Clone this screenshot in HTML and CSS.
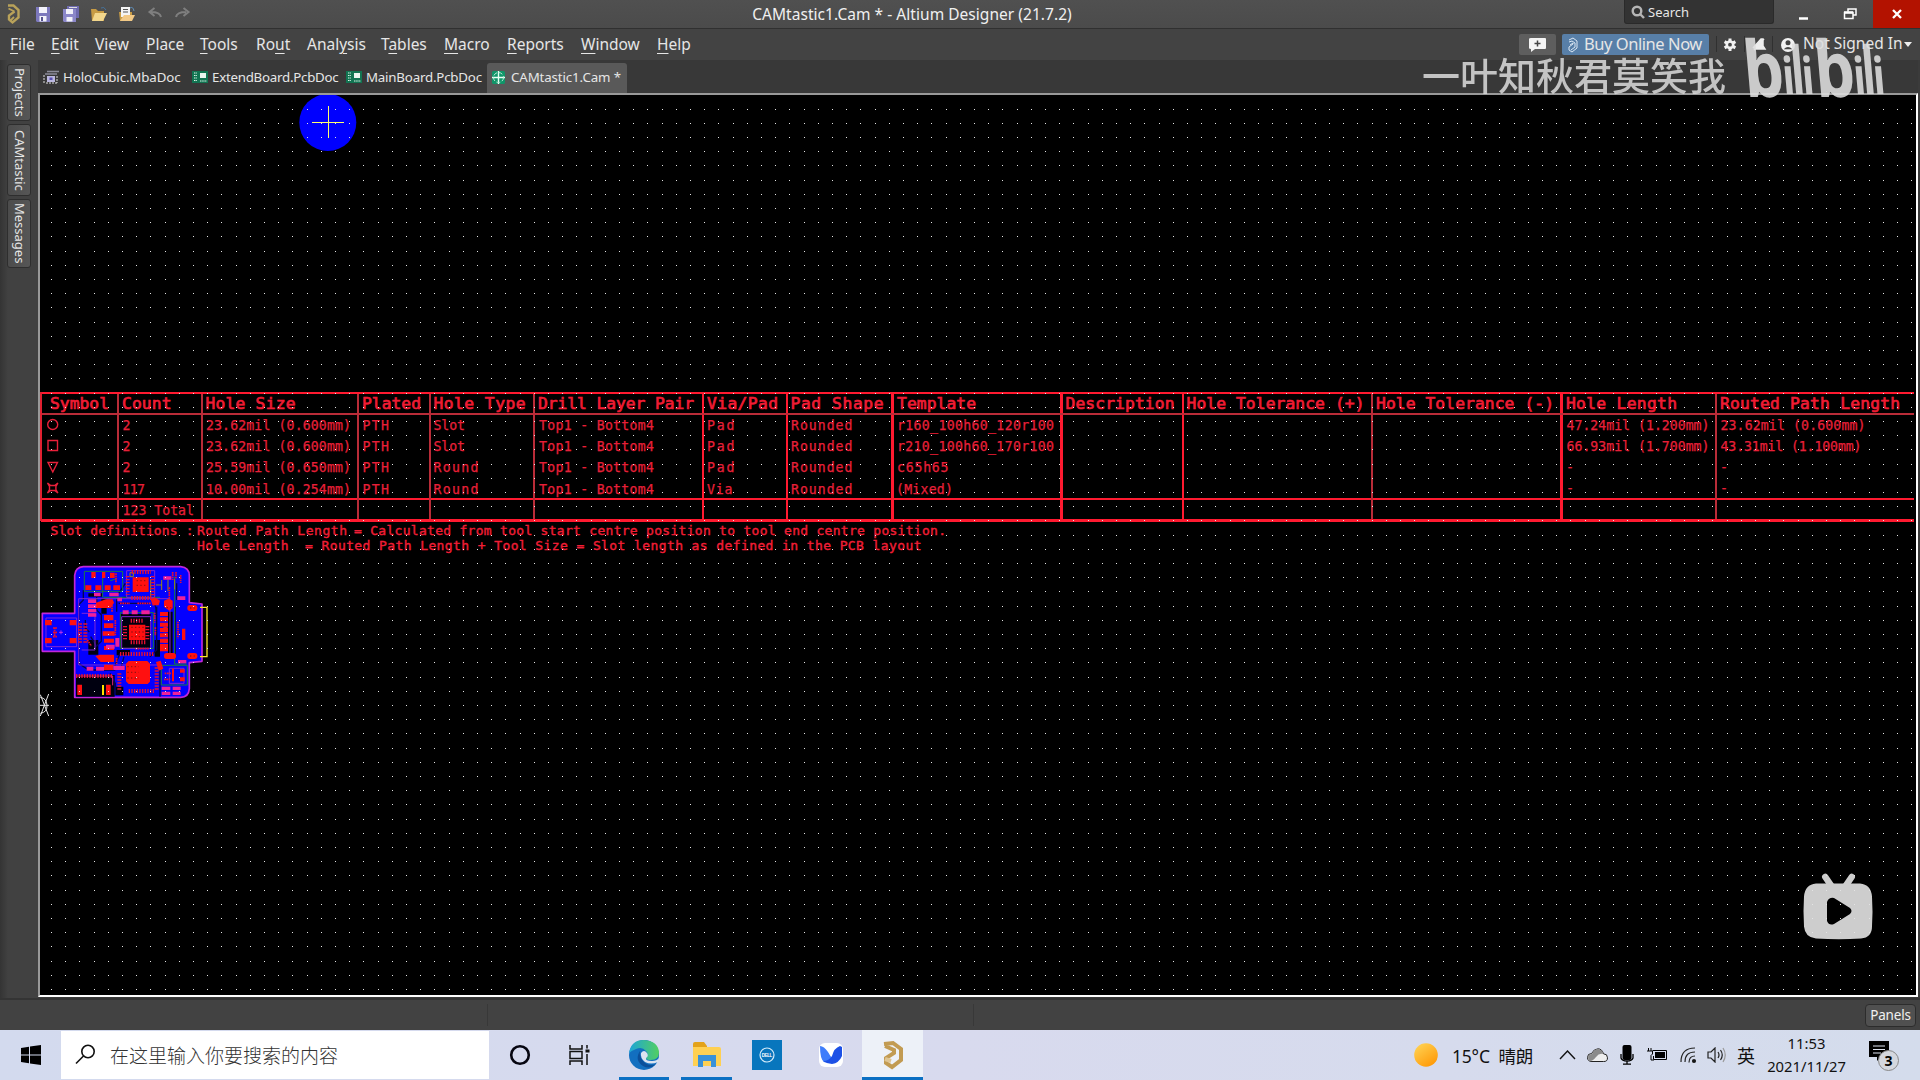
FILE: index.html
```html
<!DOCTYPE html>
<html lang="en">
<head>
<meta charset="utf-8">
<title>CAMtastic1.Cam * - Altium Designer (21.7.2)</title>
<link rel="stylesheet" href="styles.css">
</head>
<body>
<div class="app">
  <header class="titlebar">
    <div class="quick">
      <svg width="200" height="28" viewBox="0 0 200 28">
        <g fill="none" stroke="#b9a25a" stroke-width="2.4"><path d="M8 5.500h5.500l5 4.500v7.500l-6 5-3.500-3v-4l5.500-4"/><path d="M8.500 8.500l6 3M14 17l-4 4" stroke-width="1.800"/></g>
        <g><path d="M36 7h14v15H37l-1-1z" fill="#7c78bd"/><path d="M39 7h8v6h-8zM39.500 16h7v5.500h-7z" fill="#f2f2fa"/><path d="M41 17h2v4h-2z" fill="#55528e"/></g>
        <g><path d="M67 6h12v12H67z" fill="#6e6aae"/><path d="M63 9h13v13H64l-1-1z" fill="#8b87c9"/><path d="M66 9h7v5h-7zM66.500 17h6v4.500h-6z" fill="#f2f2fa"/><path d="M69 7h8v1h-8z" fill="#ddd"/></g>
        <g><path d="M91 9h5l2 2h6v10H92z" fill="#c79b45"/><path d="M95 13h12l-4 8H92z" fill="#f2d68c"/><path d="M101 8q3-2 5 2" fill="none" stroke="#47739b"/></g>
        <g><path d="M119 12h13v9h-12z" fill="#c79b45"/><path d="M121 7h9v10h-9z" fill="#f4f4f4"/><path d="M123 9.500h5M123 12h5" stroke="#555"/><path d="M124 15h11l-3 6h-12z" fill="#f2c986"/><path d="M130 8q3-2 4 3" fill="none" stroke="#5f8fba"/></g>
        <g fill="none" stroke="#7f7f7f" stroke-width="2"><path d="M161 17q-1-5-10-5M154.500 8l-5 4 5 4"/><path d="M176 17q1-5 10-5M183.500 8l5 4-5 4"/></g>
      </svg>
    </div>
    <div class="title">CAMtastic1.Cam * - Altium Designer (21.7.2)</div>
    <div class="search-box">
      <svg width="14" height="14" viewBox="0 0 14 14" fill="none" stroke="#b5b5b5" stroke-width="2.400"><circle cx="6" cy="6" r="4.300"/><path d="M9 9l4 4"/></svg>
      <span>Search</span>
    </div>
    <div class="win-buttons">
      <svg width="99" height="28" viewBox="0 0 99 28" fill="none" stroke="#fff"><path d="M25 18.500h9" stroke-width="2.500"/><path d="M74 11.500V9h8v6h-2.500M70.500 12.500h8.500v6h-8.500z" stroke-width="1.500"/><path d="M70 12.500h9" stroke-width="2.500"/></svg>
      <div class="close"><svg width="10" height="10" viewBox="0 0 10 10" stroke="#fff" stroke-width="2.300"><path d="M1 1l8 8M9 1L1 9"/></svg></div>
    </div>
  </header>

  <nav class="menubar">
    <div class="menus">
      <span><u>F</u>ile</span><span><u>E</u>dit</span><span><u>V</u>iew</span><span><u>P</u>lace</span><span><u>T</u>ools</span><span>Ro<u>u</u>t</span><span>Anal<u>y</u>sis</span><span>T<u>a</u>bles</span><span><u>M</u>acro</span><span><u>R</u>eports</span><span><u>W</u>indow</span><span><u>H</u>elp</span>
    </div>
    <div class="account">
      <div class="comment"><svg width="17" height="14" viewBox="0 0 17 14"><path d="M2 0h14q1 0 1 1v9q0 1-1 1H6l-4 3v-3q-2 0-2-1V1q0-1 2-1z" fill="#f4f4f4"/><path d="M5.500 5.500h6M8.500 2.500v6" stroke="#444" stroke-width="1.500"/></svg></div>
      <div class="buy"><svg width="10" height="16" viewBox="0 0 10 16" fill="none" stroke="#dce8f4"><path d="M1 3l4-2 4 3v7l-5 4-3-2v-3l4-3V6L2 8M1 5l3-1 3 2v4l-4 3"/></svg><span>Buy Online Now</span></div>
      <svg class="acct-icons" width="84" height="30" viewBox="0 0 84 30"><path d="M2.500 6v16M30.500 6v16M58.500 6v16" stroke="#303030"/><g stroke="#f2f2f2"><path d="M16 8.500v12.500M10.600 11.600l10.800 6.300M10.600 17.900l10.800-6.300" stroke-width="3"/><circle cx="16" cy="14.700" r="3.200" fill="#454545" stroke-width="2.600"/></g><path d="M39 18l8-9h2v7l2 3H41M40 20L50 9" fill="#eee" stroke="#eee" stroke-width="1.500"/><circle cx="74" cy="15" r="7" fill="#f2f2f2"/><circle cx="74" cy="12.800" r="2.500" fill="#454545"/><path d="M69.700 19.200q4.300-4.500 8.600 0" fill="#454545"/></svg>
      <span class="signed">Not Signed In</span><i class="caret"></i>
    </div>
  </nav>

  <div class="work">
    <aside class="side">
      <span class="s1">Projects</span><span class="s2">CAMtastic</span><span class="s3">Messages</span>
    </aside>
    <main class="editor">
      <div class="doc-tabs">
        <div class="doc d1"><svg width="16" height="14" viewBox="0 0 16 14"><path d="M4 1.500h12M2 4h12" stroke="#8b8b99" stroke-width="1.500"/><path d="M4 6h8v6H4z" fill="#bbb8e0"/><path d="M6.500 7.500h3v2.500h-3z" fill="#5951b0"/><path d="M1 5v8M14 6v7M3 13h11" stroke="#ddd" stroke-dasharray="2 1"/></svg><span>HoloCubic.MbaDoc</span></div>
        <div class="doc d2"><svg width="16" height="12" viewBox="0 0 16 12"><path d="M0 0h16v12H0z" fill="#127452"/><path d="M2 2h3M2 4.500h3M2 7h3M2 9.500h3M8 10h7" stroke="#dff5ea" stroke-dasharray="1.500 .700"/><path d="M8 2h6v5H8z" fill="#e9f5ef"/></svg><span>ExtendBoard.PcbDoc</span></div>
        <div class="doc d3"><svg width="16" height="12" viewBox="0 0 16 12"><path d="M0 0h16v12H0z" fill="#127452"/><path d="M2 2h3M2 4.500h3M2 7h3M2 9.500h3M8 10h7" stroke="#dff5ea" stroke-dasharray="1.500 .700"/><path d="M8 2h6v5H8z" fill="#e9f5ef"/></svg><span>MainBoard.PcbDoc</span></div>
        <div class="doc active"><svg width="13" height="13" viewBox="0 0 13 13"><rect width="13" height="13" rx="1.500" fill="#109569"/><path d="M6.500 0v13M0 6.500h13" stroke="#e8fff5" stroke-width="1.400"/><circle cx="6.500" cy="6.500" r="5" fill="none" stroke="#b9ead5" stroke-dasharray="4 1.800"/></svg><span>CAMtastic1.Cam *</span></div>
      </div>
      <div class="canvas">
        <svg class="cam" width="1876" height="901" viewBox="40 95 1876 901">
          <circle cx="327.800" cy="122.500" r="28.500" fill="#00f"/>
          <path d="M312 122.500h32M328.500 106v32" stroke="#ffff6e"/>

          <g class="grid-lines">
            <path d="M41 393H1914M41 499H1914M703 392V521M787 392V521M1183 392V521" stroke="#ff1a30" stroke-width="2"/>
            <path d="M41 520.500H1914M892.500 392V521M1061.500 392V521M1561.500 392V521" stroke="#ff1a30" stroke-width="3"/>
            <path d="M41 414H1914M118 394V519M202 394V519M358 394V519M430 394V519M534 394V519M1372 394V519M1716 394V519" stroke="#b92c38" stroke-width="2"/>
            <path d="M41 392V521" stroke="#e02030" stroke-width="2"/>
          </g>

          <g class="head">
            <text x="50" y="408.500" textLength="59">Symbol</text>
            <text x="122" y="408.500" textLength="49.500">Count</text>
            <text x="205.500" y="408.500" textLength="90">Hole Size</text>
            <text x="362" y="408.500" textLength="59">Plated</text>
            <text x="433.500" y="408.500" textLength="92">Hole Type</text>
            <text x="538" y="408.500" textLength="156">Drill Layer Pair</text>
            <text x="707" y="408.500" textLength="71">Via/Pad</text>
            <text x="790.500" y="408.500" textLength="93">Pad Shape</text>
            <text x="897" y="408.500" textLength="79">Template</text>
            <text x="1065.500" y="408.500" textLength="109">Description</text>
            <text x="1186.500" y="408.500" textLength="178">Hole Tolerance (+)</text>
            <text x="1376" y="408.500" textLength="178">Hole Tolerance (-)</text>
            <text x="1566" y="408.500" textLength="111">Hole Length</text>
            <text x="1720" y="408.500" textLength="180">Routed Path Length</text>
          </g>

          <g fill="none" stroke="#e8203a" stroke-width="1.400">
            <circle cx="52.700" cy="424.500" r="5"/>
            <path d="M48 440.500h9.500v10H48zM48 462.500h9.500l-4.700 9.500zM47.500 483l3.200 2.500h4l3.200-2.500-2 3.500v3l2 3.500-3.200-2.500h-4l-3.200 2.500 2-3.500v-3z"/>
          </g>

          <g class="body">
            <text x="122.500" y="430">2</text><text x="122.500" y="451">2</text><text x="122.500" y="472.300">2</text>
            <text x="122.500" y="493.500" textLength="22.500">117</text><text x="122.500" y="514.700" textLength="71.500">123 Total</text>
            <text x="206" y="430" textLength="145">23.62mil (0.600mm)</text><text x="206" y="451" textLength="145">23.62mil (0.600mm)</text><text x="206" y="472.300" textLength="145">25.59mil (0.650mm)</text><text x="206" y="493.500" textLength="145">10.00mil (0.254mm)</text>
            <text x="362.500" y="430" textLength="26.500">PTH</text><text x="362.500" y="451" textLength="26.500">PTH</text><text x="362.500" y="472.300" textLength="26.500">PTH</text><text x="362.500" y="493.500" textLength="26.500">PTH</text>
            <text x="433.500" y="430" textLength="31.500">Slot</text><text x="433.500" y="451" textLength="31.500">Slot</text><text x="433.500" y="472.300" textLength="45">Round</text><text x="433.500" y="493.500" textLength="45">Round</text>
            <text x="539" y="430" textLength="115">Top1 - Bottom4</text><text x="539" y="451" textLength="115">Top1 - Bottom4</text><text x="539" y="472.300" textLength="115">Top1 - Bottom4</text><text x="539" y="493.500" textLength="115">Top1 - Bottom4</text>
            <text x="707" y="430" textLength="27.500">Pad</text><text x="707" y="451" textLength="27.500">Pad</text><text x="707" y="472.300" textLength="27.500">Pad</text><text x="707" y="493.500" textLength="25.500">Via</text>
            <text x="791" y="430" textLength="61.500">Rounded</text><text x="791" y="451" textLength="61.500">Rounded</text><text x="791" y="472.300" textLength="61.500">Rounded</text><text x="791" y="493.500" textLength="61.500">Rounded</text>
            <text x="897" y="430" textLength="157">r160_100h60_120r100</text><text x="897" y="451" textLength="157">r210_100h60_170r100</text><text x="897" y="472.300" textLength="51.500">c65h65</text><text x="896" y="493.500" textLength="57">(Mixed)</text>
            <text x="1566.500" y="430" textLength="143">47.24mil (1.200mm)</text><text x="1566.500" y="451" textLength="143">66.93mil (1.700mm)</text><text x="1566" y="471.500">-</text><text x="1566" y="493">-</text>
            <text x="1720.500" y="430" textLength="145">23.62mil (0.600mm)</text><text x="1720.500" y="451" textLength="141">43.31mil (1.100mm)</text><text x="1720" y="471.500">-</text><text x="1720" y="493">-</text>
          </g>
          <g class="body note">
            <text x="50.500" y="535.300" textLength="143">Slot definitions :</text><text x="197" y="535.300" textLength="150">Routed Path Length</text><text x="354" y="535.300" textLength="592">= Calculated from tool start centre position to tool end centre position.</text>
            <text x="197" y="549.500" textLength="91.500">Hole Length</text><text x="305" y="549.500" textLength="616.500">= Routed Path Length + Tool Size = Slot length as defined in the PCB layout</text>
          </g>

          <g transform="translate(20 540) scale(.33333)">
            <path d="M190 80H482Q508 82 508 108V188L546 192V364L508 368V446Q506 472 482 472H164V334H67V220H164V106Q166 82 190 80Z" fill="#0400ff" stroke="#c126d8" stroke-width="5" stroke-linejoin="round"/>
            <path d="M168 405H284V470H168ZM205 160h42v10h-42zM205 300h30v44h-30zM290 330h40v16h-40zM300 222h92v104h-92zM244 175h16v46h-16zM404 300h16v50h-16zM444 215h14v130h-14zM286 440h24v26h-24z" fill="#000010"/>
            <g fill="none" stroke="#060650" stroke-width="4"><path d="M190 150v30l-14 14v176l30 20h80M230 170v40l14 14v80l-20 20M290 175v40M410 200v130l-20 20M466 200v150M300 340l-16 40M310 172h100M270 400l16 30v30M420 390v80M196 240v24l12 12M212 290l18 30M296 190h90M400 176l8 30v20M312 350l-8 30M470 130v50M316 130l-20 30"/></g>
            <g fill="none" stroke="#1b7e40" stroke-width="3"><path d="M193 94H308V154H193ZM248 95V172M250 172H420M301 218H400V325H301ZM464 110V372H500M424 376H502V435H424ZM271 122l20-6"/></g>
            <g fill="none" stroke="#8225d5" stroke-width="3"><path d="M176 176V375H420M176 176H450V350M78 234H170V320H78ZM320 92H404V172H320ZM305 230H392V325H305ZM448 385H492V430H448ZM185 220h40v110h-40"/></g>
            <g fill="none" stroke="#978b14" stroke-width="3"><path d="M330 98h10v12h-10zM392 118V170M408 135h18M425 120v30M444 118v36M464 118v30"/></g>
            <path d="M540 202H561V350H540" fill="none" stroke="#ffe62a" stroke-width="4"/>
            <g fill="#ff1010">
              <path d="M338 112h48v44h-48zM327 254h49v46h-49zM326 363h56l8 8v54l-7 7h-57l-8-8v-53zM228 188l30-10h20l4 10-10 16h-44zM252 225h28v16h-28zM252 250h28v14h-28zM248 274h36v13h-36zM252 296h30v12h-30zM252 318h30v12h-30zM226 348l14-4h42v22h-40zM252 374h28v16h-28zM420 216h24v12h-24zM420 232h24v12h-24zM420 248h24v12h-24zM420 264h24v12h-24zM420 280h24v12h-24zM420 296h24v12h-24zM420 312h24v22h-24zM432 182l14-6 12 6v22l-10 8-16-12zM75 240h20v16h-20zM149 240h20v16h-20zM75 294h20v16h-20zM149 294h20v16h-20zM172 434h14v31h-14zM258 434h14v31h-14zM214 96h13v18h-13zM246 96h10v18h-10zM270 98h14v16h-14zM196 136h18v14h-18zM226 136h18v14h-18zM254 136h18v14h-18zM280 136h20v14h-20zM392 178l12-6 16 10-4 14h-18zM408 366l14-4 8 24-14 6zM486 266h10v34h-10zM456 386h6v38h-6zM480 388h14v10h-14zM480 412h14v12h-14z"/>
              <rect x="502" y="195" width="30" height="18" rx="8"/><rect x="502" y="339" width="30" height="18" rx="8"/><rect x="432" y="339" width="36" height="18" rx="8"/>
            </g>
            <g fill="#f0209a"><path d="M204 178h25v11h-25zM204 193h25v11h-25zM204 207h25v10h-25zM204 220h25v10h-25zM222 158h20v11h-20zM268 158h28v11h-28zM472 169h24v11h-24zM292 173h14v11h-14zM308 211h18v12h-18zM335 211h18v12h-18zM364 211h25v12h-25zM200 380h20v12h-20zM228 380h24v12h-24zM280 378h34v12h-34zM425 440h26v10h-26zM458 440h24v10h-24zM425 455h26v10h-26zM458 455h24v10h-24zM474 360h25v10h-25zM430 109h24v10h-24zM258 314h26v12h-26zM286 294h12v26h-12z"/></g>
            <g stroke="#e81030" fill="none"><path d="M332 242h40M332 307h44M326 453h76M300 342h102M168 408h112M335 96h58M334 174h60" stroke-width="12" stroke-dasharray="4 4"/><path d="M315 258v40M382 258v42M298 400v50M410 382v70M323 108v56M398 108v60M180 250v62M196 250v62M436 260v70" stroke-width="12" stroke-dasharray="4 5"/><path d="M99 264h14M99 277h14M99 290h14M104 262v30M458 96v24M468 96v20M482 105v24M202 300l12 18M400 180v16M474 245v50M434 400h20M432 418h20M448 142v36M288 100v30M352 190h40M300 190h30M276 196v20M286 240v46M346 326h40M290 354v18M404 218v30M406 262v24" stroke-width="5" stroke-dasharray="5 2"/></g>
            <path d="M334 262h38M334 276h38M334 290h38M322 380h34M322 397h34M322 414h34M350 122h28M350 136h28M440 203h14M510 204h14M510 348h14" stroke="#9a1010" stroke-width="4" stroke-dasharray="4 7"/>
            <path d="M117 277h12M123 271v12" stroke="#f4d" stroke-width="2"/>
            <path d="M249 435v30" stroke="#ffe100" stroke-width="6"/>
            <path d="M170 408H278V436" stroke="#e02080" fill="none" stroke-width="3"/>
            <g stroke="#e8e8e8" stroke-width="3" fill="none"><path d="M60 496H87M61 464L86 528M86 462L61 528"/><path d="M61 472q19 3 20 24t-20 24"/></g>
          </g>

          <g opacity=".82">
            <path d="M1825.300 877l6.500 9.500M1851.700 877l-6.500 9.500" stroke="#fafafa" stroke-width="6.500" stroke-linecap="round"/>
            <path fill="#fafafa" fill-rule="evenodd" d="M1816 883.500h44q11 1 12 13 1 15 0 30 0 11-11 12-22 1.500-45 0-11-1-12-12-1-16 0-30 1-12 12-13zM1827 902v19q2 5 7 3l16-10q3-3 0-6l-16-10q-5-1-7 4z"/>
          </g>
          <path class="dots" id="dots"/>
        </svg>
      </div>
    </main>
  </div>

  <div class="statusbar"><i></i><i></i><button>Panels</button></div>

  <footer class="taskbar">
    <div class="start"><svg width="20" height="20" viewBox="0 0 20 20"><path d="M0 3l8-1.200v7.700H0zM9 1.600L20 0v9.500H9zM0 10.500h8v7.700L0 17zM9 10.500h11V20L9 18.400z"/></svg></div>
    <div class="find"><svg width="21" height="21" viewBox="0 0 21 21" fill="none" stroke="#111" stroke-width="1.600"><circle cx="13" cy="7.500" r="6.200"/><path d="M8.500 12L1 19.500"/></svg><span>在这里输入你要搜索的内容</span></div>
    <div class="apps">
      <div><svg width="22" height="22" viewBox="0 0 22 22"><circle cx="11" cy="11" r="8.800" fill="none" stroke="#060610" stroke-width="2.600"/></svg></div>
      <div><svg width="22" height="20" viewBox="0 0 22 20" fill="none" stroke="#111" stroke-width="1.500"><path d="M1 0v4h12V0M1 20v-4h12v4M1 6.500h12v7H1zM18 0v3.500M18 9v11"/><path d="M16.500 6h4" stroke-width="3"/></svg></div>
      <div class="run r1"><svg width="32" height="32" viewBox="0 0 32 32"><defs><linearGradient id="eg" x1="0" x2="1"><stop offset="0" stop-color="#1da4d8"/><stop offset="1" stop-color="#52cf61"/></linearGradient></defs><circle cx="16" cy="16" r="15" fill="#126fc0"/><path d="M1 14Q3 1 16 1q14 1 15 12 0 8-8 8-5 0-5-2 3-4 0-7-4-5-10-2Q3 12 1 14z" fill="url(#eg)"/><path d="M12 12q-6 9 3 15 7 4 13-2-8 3-13-3-4-5-3-10z" fill="#0b4f9a"/><path d="M13 14q3-4 6 0 2 3-1 5-1 3 6 3 5 0 7-3l-1 4q-7 3-13 0-5-4-4-9z" fill="#dbe3f0"/></svg></div>
      <div class="run r2"><svg width="30" height="26" viewBox="0 0 30 26"><path d="M1 2q0-2 2-2h9l3 4v5H1z" fill="#e3a21a"/><path d="M1 5h26q2 0 2 2v17H1z" fill="#ffd052"/><path d="M6 13h18v12h-5v-6h-8v6H6z" fill="#3a91d8"/></svg></div>
      <div><svg width="30" height="30" viewBox="0 0 30 30"><path d="M0 0h30v30H0z" fill="#0876bd"/><circle cx="15" cy="15" r="7" fill="none" stroke="#d5ecfa" stroke-width="1.200"/><text x="9.800" y="17" class="dell" textLength="10.500">DELL</text></svg></div>
      <div><svg width="26" height="26" viewBox="0 0 26 26"><rect x="1" y="1" width="24" height="24" rx="6" fill="#fff"/><path d="M2 4q4 0 8 6 2 4 5 7-5 4-9 3-4-3-4-16z" fill="#3f7dfb"/><path d="M22 4l2 1v9q-3 7-10 8-5 0-9-3 6 0 9-5 2-8 8-10z" fill="#1c50e6"/></svg></div>
      <div class="run cur"><svg width="22" height="30" viewBox="0 0 22 30" fill="none" stroke="#c29b52" stroke-width="4"><path d="M2 4l9-1 8 6v11l-9 7-6-4v-5l8-5v-3l-9-4"/><path d="M3 19l6 2" stroke="#dfc592"/></svg></div>
    </div>
    <div class="tray">
      <svg width="24" height="24" viewBox="0 0 24 24"><defs><linearGradient id="sun" x2=".7" y2="1"><stop stop-color="#ffd75a"/><stop offset="1" stop-color="#ff9a08"/></linearGradient></defs><circle cx="12" cy="12" r="11.800" fill="url(#sun)"/></svg>
      <span class="weather">15°C&nbsp; 晴朗</span>
      <svg width="17" height="10" viewBox="0 0 17 10"><path d="M1 9l7.500-8L16 9" fill="none" stroke="#111" stroke-width="1.400"/></svg>
      <svg width="21" height="15" viewBox="0 0 21 15"><path d="M5 13.500q-4.500 0-4.500-4t4-4Q7 .800 11 .800t5.500 5q4 0 4 4t-4 3.700z" fill="#eee" stroke="#222"/><path d="M1 9q1-3 4-3 2-5 6-5 5 1 5 5-4-1-7 3-3 4-6 4-2-1-2-4z" fill="#8b8b8b"/></svg>
      <svg width="14" height="20" viewBox="0 0 14 20"><rect x="2.500" width="9" height="15" rx="2"/><path d="M1 9v4q1 3 6 3t6-3V9M7 16v3M3 19.200h8" fill="none" stroke="#000" stroke-width="1.300"/></svg>
      <svg width="20" height="14" viewBox="0 0 20 14"><path d="M5.500 2.500h14v9h-13V8" fill="none" stroke="#000"/><path d="M8 4h10v6H8z"/><path d="M1.500 0v3M4 0v3M0 3h5.500v3L4 7.500V12H7" fill="none" stroke="#000"/></svg>
      <svg width="17" height="17" viewBox="0 0 17 17" fill="none" stroke="#222" stroke-width="1.200"><path d="M1 15Q1 1 15 1M5 15Q5 5 15 5M9 15.500Q9 9 15 9"/><circle cx="14" cy="14" r="1.500" fill="#111"/></svg>
      <svg width="20" height="16" viewBox="0 0 20 16" fill="none" stroke="#222" stroke-width="1.200"><path d="M1 5h3l4-4v14l-4-4H1zM11 5q2 3 0 6M13.500 3q3.500 5 0 10"/><path d="M16 1q4.500 7 0 14" stroke="#999"/></svg>
      <span class="ime">英</span>
      <span class="clock"><b>11:53</b><b>2021/11/27</b></span>
      <svg width="31" height="34" viewBox="0 0 31 34"><path d="M0 3h20v16h-8l-4 4v-4H0z"/><path d="M4 8h12M4 11.500h12M4 15h8" stroke="#dfe5f2"/><circle cx="19.500" cy="22.500" r="10" fill="#d4d7de" stroke="#888"/><text x="15.500" y="28" class="badge">3</text></svg>
    </div>
  </footer>
</div>

<div class="watermark">
  <span>一叶知秋君莫笑我</span>
  <svg width="150" height="72" viewBox="0 0 150 72">
    <g id="half" transform="skewX(5)">
      <text class="wb" transform="translate(-4 65) scale(.82 1)">b</text>
      <text class="wi" transform="translate(34.500 61.500) scale(.78 1)">i</text>
      <text class="wl" transform="translate(43.500 61.500) scale(.66 1)">l</text>
      <text class="wi" transform="translate(54 61.500) scale(.78 1)">i</text>
    </g>
    <g transform="translate(71 0) skewX(5)">
      <text class="wb" transform="translate(-4 65) scale(.82 1)">b</text>
      <text class="wi" transform="translate(34.500 61.500) scale(.78 1)">i</text>
      <text class="wl" transform="translate(43.500 61.500) scale(.66 1)">l</text>
      <text class="wi" transform="translate(54 61.500) scale(.78 1)">i</text>
    </g>
  </svg>
</div>
<script>
// Snap grid: 14.2px pitch, each point lit on a whole device pixel.
let d = '';
for (let r = 0; r < 63; r++)
  for (let c = 0; c < 132; c++)
    d += 'M' + Math.floor(51.41 + 14.2 * c) + ' ' + Math.floor(109.01 + 14.2 * r) + 'h1v1h-1z';
document.getElementById('dots').setAttribute('d', d);
</script>
</body>
</html>
```
FILE: styles.css
```css
* { box-sizing: border-box; }
body { margin: 0; overflow: hidden; background: #3a3a3a; font-family: "Noto Sans", "Noto Sans CJK SC", sans-serif; color: #e6e6e6; }
svg { display: block; flex: none; }
.app { width: 1920px; height: 1080px; display: flex; flex-direction: column; }

.titlebar { height: 29px; flex: none; display: grid; grid-template-columns: 624px 576px 424px 150px 1fr; background: linear-gradient(#505050, #4b4b4b); border-bottom: 1px solid #303030; }
.titlebar .title { text-align: center; font-size: 15.500px; line-height: 28px; letter-spacing: .04px; color: #f0f0f0; white-space: nowrap; }
.titlebar .title { grid-column: 2; }
.search-box { grid-column: 4; height: 24px; display: flex; align-items: center; gap: 3px; padding-left: 6px; background: #333; border: 1px solid #2a2a2a; border-top: 0; border-radius: 0 0 3px 3px; font-size: 13px; }
.win-buttons { display: flex; }
.close { flex: 1; height: 28px; display: flex; align-items: center; justify-content: center; background: #b31200; }

.menubar { height: 31px; flex: none; display: flex; justify-content: space-between; background: #434343; }
.menus { display: grid; grid-template-columns: 41px 44px 51px 54px 56px 51px 74px 63px 63px 74px 76px 50px; padding-left: 10px; font-size: 15.500px; line-height: 30px; letter-spacing: 0; }
.menus u { text-underline-offset: 3px; text-decoration-thickness: 1px; }
.account { display: flex; align-items: center; width: 401px; height: 31px; font-size: 16.500px; white-space: nowrap; }
.comment { width: 37px; height: 21px; margin-right: 6px; display: flex; align-items: center; justify-content: center; background: #5e5e5e; border-radius: 2px; }
.buy { width: 147px; height: 21px; margin-right: 5px; padding-left: 6px; display: flex; align-items: center; gap: 6px; background: #587fa8; border-radius: 2px; letter-spacing: -.45px; line-height: 20px; }
.buy span { height: 22px; }
.signed { width: 101px; margin-left: 5px; font-size: 15.500px; letter-spacing: 0; line-height: 29px; height: 31px; }
.caret { border: 4px solid transparent; border-top: 5px solid #eee; border-bottom: 0; }

.work { flex: 1; min-height: 0; display: flex; background: #3b3b3b; }
.side { width: 38px; padding: 4px 0 0 7px; display: flex; flex-direction: column; gap: 3px; background: linear-gradient(90deg, #343434, #414141 8px); }
.side span { width: 24px; padding-left: 1px; writing-mode: vertical-rl; display: flex; align-items: center; justify-content: center; font-size: 13px; line-height: 23px; background: linear-gradient(90deg, #4c4c4c, #565656); border: 1px solid #2e2e2e; border-radius: 3px; }
.s1 { height: 57px; } .s2 { height: 72px; } .s3 { height: 69px; }
.editor { flex: 1; display: flex; flex-direction: column; padding: 0 2px 1px 0; }
.doc-tabs { height: 33px; padding: 3px 0 0 5px; display: flex; font-size: 13.300px; white-space: nowrap; background: #383838; }
.doc { height: 30px; padding-bottom: 2px; display: flex; align-items: center; gap: 4px; letter-spacing: -.12px; }
.d1 { width: 149px; } .d2 { width: 154px; letter-spacing: -.25px; } .d3 { width: 141px; letter-spacing: -.2px; }
.doc.active { width: 140px; padding-left: 5px; gap: 6px; background: #595959; border-radius: 3px 3px 0 0; }
.canvas { flex: 1; border: 2px solid #fff; border-top-color: #999; border-left-color: #999; background: #000; overflow: hidden; }
.cam text { font-family: "DejaVu Sans Mono", monospace; fill: #f01c34; stroke: #f01c34; white-space: pre; }
.cam .head text { font-size: 16.300px; stroke-width: .7px; }
.cam .body text { font-size: 13.200px; stroke-width: .25px; fill: #e4213a; }
.cam .note text { font-size: 13px; stroke-width: .4px; fill: #f01f36; }
.dots { fill: #e4e4e4; shape-rendering: crispEdges; }

.statusbar { height: 32px; flex: none; display: grid; grid-template-columns: 488px 486px 1fr; align-items: center; background: #424242; border-top: 2px solid #343434; }
.statusbar i { height: 22px; border-right: 1px solid #383838; }
.statusbar button { justify-self: end; width: 51px; height: 23px; margin-right: 4px; padding: 0; font: 13.500px/20px "Noto Sans", sans-serif; letter-spacing: -.2px; color: #f0f0f0; background: #505050; border: 1px solid #2c2c2c; border-radius: 4px; }

.taskbar { height: 50px; flex: none; display: flex; color: #111; background: linear-gradient(90deg, #d3daee, #d8daee 50%, #d4dcec); }
.start { width: 61px; display: flex; align-items: center; justify-content: center; }
.find { width: 428px; display: flex; align-items: center; gap: 14px; padding: 0 0 2px 14px; margin: 1px 0; background: #fff; font-size: 19px; color: #333; font-family: "Noto Sans CJK SC", sans-serif; font-weight: 300; }
.apps { display: grid; grid-template-columns: 62px 58px 68px 58px 64px 63px 61px; }
.apps > div { display: flex; align-items: center; justify-content: center; border-bottom: 3px solid transparent; border-top: 3px solid transparent; }
.apps .run { border-bottom-color: #0b70c3; }
.apps .r1 { margin: 0 8px 0 10px; }
.apps .r2 { margin: 0 3px 0 4px; }
.apps .cur { border-top-color: #edf1f8; background: #edf1f8; }
.dell { font: bold 4.500px "Liberation Sans", sans-serif; fill: #fff; }
.tray { flex: 1; display: grid; grid-template-columns: 38px 107px 28px 33px 27px 33px 27px 30px 28px 104px 46px; justify-content: end; align-items: center; padding-right: 5px; white-space: nowrap; }
.weather { font-size: 17.500px; letter-spacing: -.2px; }
.ime { font-size: 18px; font-family: "Noto Sans CJK SC", sans-serif; line-height: 24px; }
.clock { width: 83px; text-align: center; font-size: 14.800px; }
.clock b { display: block; font-weight: 400; line-height: 23px; }
.badge { font: bold 14px "Noto Sans", sans-serif; }

.watermark { position: absolute; left: 1422px; top: 32px; display: flex; opacity: .88; color: #d6d6d6; }
.watermark svg { overflow: visible; }
.watermark span { width: 322px; padding-top: 21px; font: 500 38px/42px "Noto Sans CJK SC", sans-serif; white-space: nowrap; }
.watermark text { font-family: "Noto Sans", sans-serif; font-weight: 700; fill: #dedede; }
.wb { font-size: 78px; } .wl { font-size: 66px; } .wi { font-size: 51px; }
```
